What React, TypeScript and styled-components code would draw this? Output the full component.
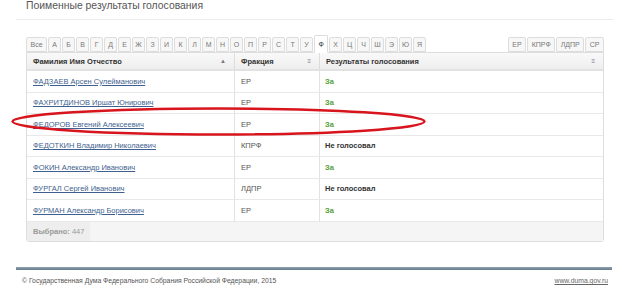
import React from "react";
import styled, { createGlobalStyle } from "styled-components";

const GlobalStyle = createGlobalStyle`
  html, body {
    margin: 0;
    padding: 0;
    background: #fff;
    font-family: "Liberation Sans", Arial, sans-serif;
  }
`;

const Page = styled.div`
  position: relative;
  width: 624px;
  height: 289px;
  overflow: hidden;
`;

const TitleBar = styled.div`
  margin: 0 11px 0 16px;
  padding-left: 10px;
  height: 19px;
  border-bottom: 1px solid #ececec;
`;

const Title = styled.h1`
  margin: 0;
  font-size: 10.4px;
  font-weight: normal;
  color: #555;
  line-height: 11px;
  padding-top: 0;
`;

const Content = styled.div`
  margin: 0 20px 0 26px;
  padding-top: 14px;
`;

const TabsRow = styled.div`
  display: flex;
  justify-content: space-between;
  align-items: flex-end;
  height: 18px;
`;

const TabGroup = styled.div`
  display: flex;
  align-items: flex-end;
  gap: 1px;
`;

const Tab = styled.div<{ $active?: boolean; $wide?: boolean }>`
  height: ${(p) => (p.$active ? 18 : 15)}px;
  box-sizing: border-box;
  padding: 0 ${(p) => (p.$wide ? 3.5 : 0)}px;
  width: ${(p) => (p.$wide ? "auto" : p.$active ? "14px" : "13px")};
  display: flex;
  align-items: center;
  justify-content: center;
  font-size: 7px;
  color: ${(p) => (p.$active ? "#333" : "#777")};
  background: ${(p) => (p.$active ? "#fff" : "#f7f7f7")};
  border: 1px solid #ddd;
  border-bottom: ${(p) => (p.$active ? "1px solid #fff" : "1px solid #ddd")};
  border-radius: 2px 2px 0 0;
  margin-bottom: ${(p) => (p.$active ? -1 : 0)}px;
  position: relative;
  z-index: ${(p) => (p.$active ? 1 : 0)};
`;

const Box = styled.div`
  border: 1px solid #ddd;
  border-radius: 0 0 3px 3px;
  background: #fff;
`;

const Grid = styled.div`
  display: grid;
  grid-template-columns: 208px 85px 1fr;
`;

const HeadCell = styled.div<{ $last?: boolean }>`
  height: 18px;
  box-sizing: border-box;
  display: flex;
  align-items: center;
  justify-content: space-between;
  padding: 0 8px 0 6px;
  font-size: 7.5px;
  font-weight: bold;
  color: #333;
  background: linear-gradient(#f9f9f9, #eeeeee);
  border-bottom: 2px solid #e2e2e2;
  border-right: ${(p) => (p.$last ? "none" : "1px solid #ddd")};
`;

const HeadMark = styled.span`
  font-size: 6px;
  color: #777;
  font-weight: normal;
`;

const Cell = styled.div<{ $last?: boolean }>`
  height: 21.5px;
  box-sizing: border-box;
  display: flex;
  align-items: center;
  padding-left: ${(p) => (p.$last ? 5 : 6)}px;
  font-size: 7.5px;
  color: #555;
  border-bottom: 1px solid #e9e9e9;
  border-right: ${(p) => (p.$last ? "none" : "1px solid #e2e2e2")};
`;

const NameLink = styled.a`
  color: #3f5f8f;
  text-decoration: underline;
  cursor: pointer;
`;

const Vote = styled.span<{ $yes?: boolean }>`
  font-weight: bold;
  color: ${(p) => (p.$yes ? "#58a13a" : "#333")};
`;

const Summary = styled.div`
  display: flex;
  height: 19px;
  background: #f5f5f5;
`;

const SummaryCell = styled.div`
  width: 63px;
  display: flex;
  align-items: center;
  padding-left: 6px;
  box-sizing: border-box;
  background: #eeeeee;
  font-size: 7.5px;
  color: #999;
`;

const FooterLine = styled.div`
  margin: 25px 12px 0 16px;
  height: 3px;
  background: linear-gradient(#8fa1ae, #667c8c);
`;

const Footer = styled.div`
  display: flex;
  justify-content: space-between;
  align-items: center;
  margin: 0 16px 0 22px;
  height: 22px;
  font-size: 6.8px;
  color: #555;
`;

const FooterLink = styled.a`
  color: #666;
  text-decoration: underline;
`;

const Highlight = styled.svg`
  position: absolute;
  left: 0;
  top: 0;
  pointer-events: none;
`;

const letters = "АБВГДЕЖЗИКЛМНОПРСТУФХЦЧШЭЮЯ".split("");
const parties = ["ЕР", "КПРФ", "ЛДПР", "СР"];

type Row = { name: string; faction: string; yes: boolean };

const rows: Row[] = [
  { name: "ФАДЗАЕВ Арсен Сулейманович", faction: "ЕР", yes: true },
  { name: "ФАХРИТДИНОВ Иршат Юнирович", faction: "ЕР", yes: true },
  { name: "ФЕДОРОВ Евгений Алексеевич", faction: "ЕР", yes: true },
  { name: "ФЕДОТКИН Владимир Николаевич", faction: "КПРФ", yes: false },
  { name: "ФОКИН Александр Иванович", faction: "ЕР", yes: true },
  { name: "ФУРГАЛ Сергей Иванович", faction: "ЛДПР", yes: false },
  { name: "ФУРМАН Александр Борисович", faction: "ЕР", yes: true },
];

export default function App() {
  return (
    <>
      <GlobalStyle />
      <Page>
        <TitleBar>
          <Title>Поименные результаты голосования</Title>
        </TitleBar>
        <Content>
          <TabsRow>
            <TabGroup>
              <Tab $wide>Все</Tab>
              {letters.map((l) => (
                <Tab key={l} $active={l === "Ф"}>
                  {l}
                </Tab>
              ))}
            </TabGroup>
            <TabGroup>
              {parties.map((p) => (
                <Tab key={p} $wide>
                  {p}
                </Tab>
              ))}
            </TabGroup>
          </TabsRow>
          <Box>
            <Grid>
              <HeadCell>
                Фамилия Имя Отчество <HeadMark>▲</HeadMark>
              </HeadCell>
              <HeadCell>
                Фракция <HeadMark>≡</HeadMark>
              </HeadCell>
              <HeadCell $last>
                Результаты голосования <HeadMark>≡</HeadMark>
              </HeadCell>
              {rows.map((r) => (
                <React.Fragment key={r.name}>
                  <Cell>
                    <NameLink>{r.name}</NameLink>
                  </Cell>
                  <Cell>{r.faction}</Cell>
                  <Cell $last>
                    <Vote $yes={r.yes}>{r.yes ? "За" : "Не голосовал"}</Vote>
                  </Cell>
                </React.Fragment>
              ))}
            </Grid>
            <Summary>
              <SummaryCell>
                <b>Выбрано:</b>&nbsp;447
              </SummaryCell>
            </Summary>
          </Box>
        </Content>
        <FooterLine />
        <Footer>
          <span>© Государственная Дума Федерального Собрания Российской Федерации, 2015</span>
          <FooterLink>www.duma.gov.ru</FooterLink>
        </Footer>
        <Highlight width="624" height="289">
          <ellipse
            cx="218.5"
            cy="121.5"
            rx="206"
            ry="13"
            fill="none"
            stroke="#d8141c"
            strokeWidth="2.5"
          />
        </Highlight>
      </Page>
    </>
  );
}
